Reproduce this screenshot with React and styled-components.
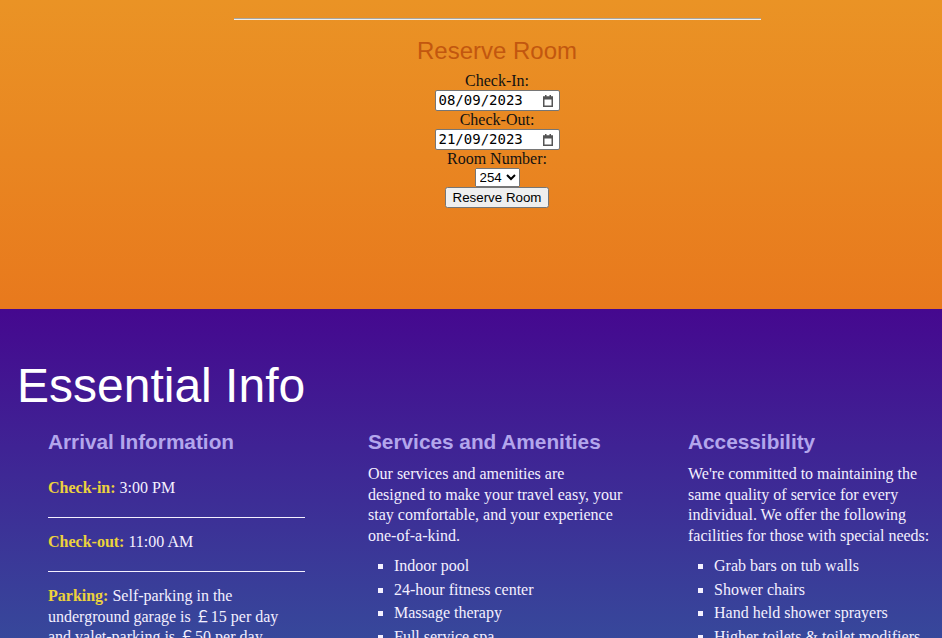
import React from 'react';
import styled, { createGlobalStyle } from 'styled-components';

const GlobalStyle = createGlobalStyle`
  html, body {
    margin: 0;
    padding: 0;
  }
  body {
    font-family: "Liberation Serif", "Times New Roman", serif;
    font-size: 16px;
    overflow-x: hidden;
  }
`;

const TopSection = styled.section`
  height: 309px;
  box-sizing: border-box;
  padding-left: 52px;
  padding-top: 18px;
  background: linear-gradient(to bottom, #ea9325 0%, #e8791d 100%);
`;

const Rule = styled.hr`
  width: 527px;
  margin: 0 auto;
  border: none;
  border-top: 1px solid #a9a49c;
  border-bottom: 1px solid #f1eee9;
`;

const Title = styled.h2`
  margin: 17px 0 7px;
  text-align: center;
  font-family: "Liberation Sans", Arial, sans-serif;
  font-size: 24px;
  font-weight: 400;
  color: #c2570f;
`;

const ReserveForm = styled.form`
  display: flex;
  flex-direction: column;
  align-items: center;
`;

const Label = styled.label`
  display: block;
  color: #111;
`;

const DateBox = styled.span`
  display: inline-flex;
  align-items: center;
  justify-content: space-between;
  box-sizing: border-box;
  width: 125px;
  height: 21px;
  padding: 0 6px 0 3px;
  background: #fff;
  border: 1px solid #767676;
  border-radius: 2px;
`;

const DateText = styled.input`
  width: 90px;
  height: 17px;
  padding: 0;
  margin: 0;
  border: none;
  outline: none;
  background: transparent;
  font-family: "DejaVu Sans Mono", monospace;
  font-size: 14px;
  line-height: 17px;
  color: #000;
`;

const CalendarIcon = () => (
  <svg width="10" height="12" viewBox="0 0 10 12" aria-hidden="true">
    <rect x="2" y="0" width="1.5" height="2" fill="#555" />
    <rect x="6.5" y="0" width="1.5" height="2" fill="#555" />
    <rect x="0" y="1.5" width="10" height="3" fill="#555" />
    <rect x="0.75" y="2.25" width="8.5" height="9" fill="none" stroke="#555" strokeWidth="1.5" />
  </svg>
);

const RoomSelect = styled.select`
  margin: 0;
`;

const SubmitButton = styled.button`
  margin: 0;
`;

const InfoSection = styled.section`
  padding: 0 0 40px;
  color: #f4f0ff;
  background: linear-gradient(to bottom, #45088f 0px, #37489b 330px, #2f60a8 700px);
`;

const SectionTitle = styled.h1`
  margin: 0;
  padding: 49px 0 17px 17px;
  font-family: "Liberation Sans", Arial, sans-serif;
  font-size: 48px;
  font-weight: 400;
  line-height: 55px;
  color: #ffffff;
`;

const Columns = styled.div`
  display: grid;
  grid-template-columns: repeat(3, 257px);
  column-gap: 63px;
  padding-left: 48px;
  align-items: start;
`;

const Column = styled.div``;

const ColumnTitle = styled.h3`
  margin: 0 0 ${p => (p.$spaced ? 24 : 10)}px;
  font-family: "Liberation Sans", Arial, sans-serif;
  font-size: 20.8px;
  line-height: 24px;
  font-weight: 700;
  color: #b3a6ec;
`;

const Text = styled.p`
  margin: 0;
  line-height: 20.6px;
`;

const Key = styled.strong`
  color: #ecd23c;
`;

const Pound = styled.span`
  font-family: "Liberation Serif", "Noto Sans CJK SC", serif;
`;

const Divider = styled.div`
  height: 1px;
  background: #f4f0ff;
  margin: 18.5px 0 14px;
`;

const List = styled.ul`
  margin: 8px 0 0;
  padding-left: 26px;
  list-style: square;
`;

const Item = styled.li`
  line-height: 23.5px;
`;

const services = [
  'Indoor pool',
  '24-hour fitness center',
  'Massage therapy',
  'Full service spa',
  'In-room jacuzzi tubs',
  'Rooftop café & smoothie bar',
];

const accessibility = [
  'Grab bars on tub walls',
  'Shower chairs',
  'Hand held shower sprayers',
  'Higher toilets & toilet modifiers',
  'Lower sink faucets',
  'Wheelchair accessible',
];

function DateField({ id, value }) {
  return (
    <DateBox>
      <DateText id={id} type="text" defaultValue={value} />
      <CalendarIcon />
    </DateBox>
  );
}

export default function App() {
  return (
    <>
      <GlobalStyle />
      <TopSection>
        <Rule />
        <Title>Reserve Room</Title>
        <ReserveForm onSubmit={e => e.preventDefault()}>
          <Label htmlFor="checkin">Check-In:</Label>
          <DateField id="checkin" value="08/09/2023" />
          <Label htmlFor="checkout">Check-Out:</Label>
          <DateField id="checkout" value="21/09/2023" />
          <Label htmlFor="room">Room Number:</Label>
          <RoomSelect id="room" defaultValue="254">
            <option>101</option>
            <option>102</option>
            <option>254</option>
            <option>301</option>
          </RoomSelect>
          <SubmitButton type="submit">Reserve Room</SubmitButton>
        </ReserveForm>
      </TopSection>

      <InfoSection>
        <SectionTitle>Essential Info</SectionTitle>
        <Columns>
          <Column>
            <ColumnTitle $spaced>Arrival Information</ColumnTitle>
            <Text><Key>Check-in:</Key> 3:00 PM</Text>
            <Divider />
            <Text><Key>Check-out:</Key> 11:00 AM</Text>
            <Divider />
            <Text>
              <Key>Parking:</Key> Self-parking in the underground garage is <Pound>￡</Pound>15 per day
              and valet-parking is <Pound>￡</Pound>50 per day.
            </Text>
          </Column>
          <Column>
            <ColumnTitle>Services and Amenities</ColumnTitle>
            <Text>
              Our services and amenities are designed to make your travel easy, your stay
              comfortable, and your experience one-of-a-kind.
            </Text>
            <List>
              {services.map(s => <Item key={s}>{s}</Item>)}
            </List>
          </Column>
          <Column>
            <ColumnTitle>Accessibility</ColumnTitle>
            <Text>
              We're committed to maintaining the same quality of service for every individual.
              We offer the following facilities for those with special needs:
            </Text>
            <List>
              {accessibility.map(s => <Item key={s}>{s}</Item>)}
            </List>
          </Column>
        </Columns>
      </InfoSection>
    </>
  );
}
